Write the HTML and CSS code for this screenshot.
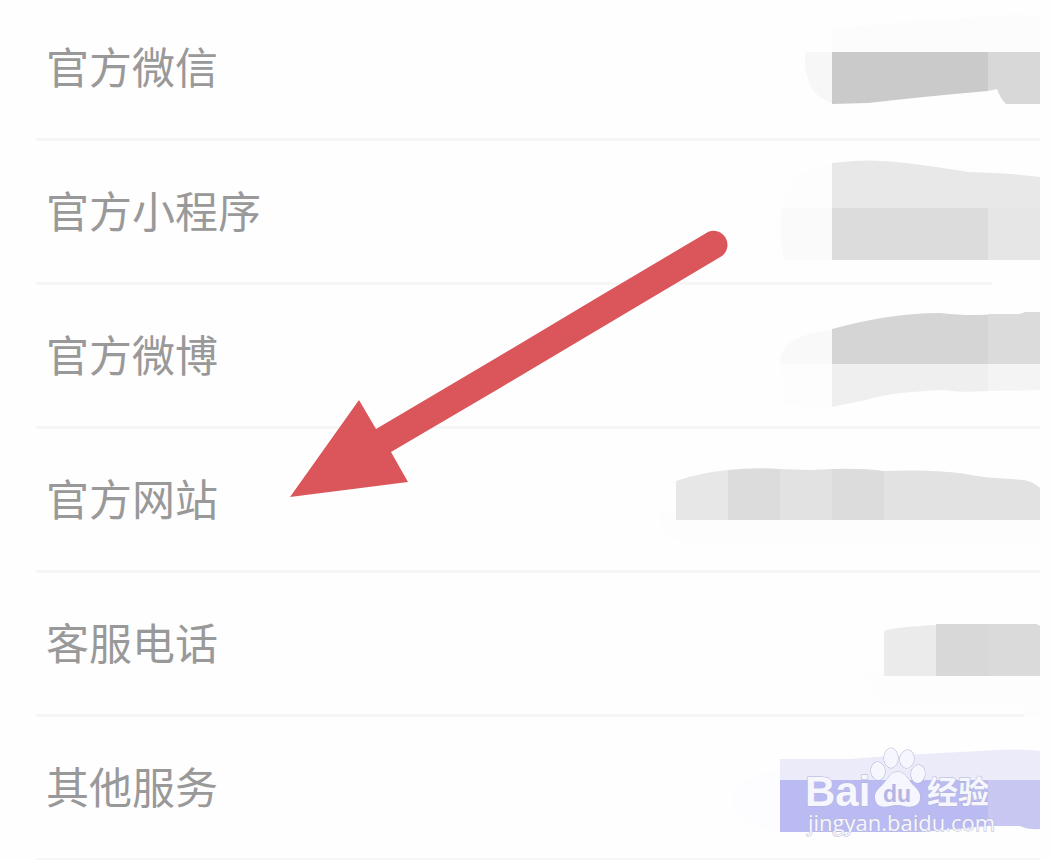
FILE: index.html
```html
<!DOCTYPE html>
<html lang="zh-CN">
<head>
    <meta charset="UTF-8">
    <meta name="viewport" content="width=device-width, initial-scale=1.0">
    <title>官方信息</title>
    <link rel="stylesheet" href="styles.css">
</head>
<body>
    <main class="page">
        <ul class="info-list">
            <li class="info-row">
                <span class="label">官方微信</span>
                <svg class="mosaic" viewBox="640 -3 400 144" aria-hidden="true">
                    <path fill="#fcfcfc" d="M832 28L990 16Q1020 13 1040 16V52H832z"/>
                    <path fill="#f7f7f7" d="M832 52H806Q803 65 808 79Q812 96 832 103z"/>
                    <path fill="#cacaca" d="M832 52H988V91Q930 96 868 103L832 104z"/>
                    <path fill="#d8d8d8" d="M988 52H1040V104H1006Q1000 98 997 89L988 91z"/>
                </svg>
            </li>
            <li class="info-row">
                <span class="label">官方小程序</span>
                <svg class="mosaic" viewBox="640 141 400 144" aria-hidden="true">
                    <path fill="#fefefe" d="M992 260H1040V285H992z"/>
                    <path fill="#fdfdfd" d="M832 164Q785 170 782 209H832z"/>
                    <path fill="#fafafa" d="M832 208H782Q778 235 784 260H832z"/>
                    <path fill="#e8e8e8" d="M832 163Q870 158 905 163Q940 167 968 172Q1010 173 1040 177V208H832z"/>
                    <path fill="#dcdcdc" d="M832 208H988V260H832z"/>
                    <path fill="#e6e6e6" d="M988 208H1040V260H988z"/>
                </svg>
            </li>
            <li class="info-row">
                <span class="label">官方微博</span>
                <svg class="mosaic" viewBox="640 285 400 144" aria-hidden="true">
                    <path fill="#f9f9f9" d="M832 330Q779 335 780 364H832z"/>
                    <path fill="#fdfdfd" d="M780 364H832V407L785 405z"/>
                    <path fill="#d5d5d5" d="M832 329Q890 313 940 313Q960 315 973 315L1020 314L1026 312H1040V364H832z"/>
                    <path fill="#dbdbdb" d="M988 314L1020 314L1026 312H1040V364H988z"/>
                    <path fill="#efefef" d="M832 364H988V391Q960 393 945 390Q890 392 866 400L832 407z"/>
                    <path fill="#f4f4f4" d="M988 364H1040V390L988 391z"/>
                </svg>
            </li>
            <li class="info-row">
                <span class="label">官方网站</span>
                <svg class="mosaic" viewBox="640 429 400 144" aria-hidden="true">
                    <path fill="#fdfdfd" d="M658 512H1040V545H700Q660 542 658 512z"/>
                    <path fill="#e7e7e7" d="M676 481Q698 473 728 470V520H676z"/>
                    <path fill="#dcdcdc" d="M728 470Q755 467 780 469V520H728z"/>
                    <path fill="#e2e2e2" d="M780 469L810 470L832 469V520H780z"/>
                    <path fill="#dcdcdc" d="M832 469Q862 468 884 471V520H832z"/>
                    <path fill="#e2e2e2" d="M884 471Q935 469 966 474Q980 477 997 478L1024 480Q1034 482 1040 488V520H884z"/>
                </svg>
            </li>
            <li class="info-row">
                <span class="label">客服电话</span>
                <svg class="mosaic" viewBox="640 573 400 144" aria-hidden="true">
                    <path fill="#fdfdfd" d="M865 672H1040V717H1024V704H880z"/>
                    <path fill="#ebebeb" d="M884 631Q895 627 936 625V676H884z"/>
                    <path fill="#d8d8d8" d="M936 624H1036L1040 626V676H936z"/>
                    <path fill="#dadada" d="M988 624H1036L1040 626V676H988z"/>
                </svg>
            </li>
            <li class="info-row">
                <span class="label">其他服务</span>
                <svg class="mosaic" viewBox="640 717 400 144" aria-hidden="true">
                    <path fill="#fdfdff" d="M780 770Q736 776 732 800Q733 825 780 832z"/>
                    <path fill="#ebebfa" d="M780 759H850Q910 754 980 751Q1015 748 1040 751V780H780z"/>
                    <path fill="#bbbbf3" d="M780 780H988V826L920 832H780z"/>
                    <path fill="#c7c7f2" d="M988 780H1040V829Q1029 830 1020 826L988 826z"/>
                </svg>
            </li>
        </ul>

        <!-- Arrow pointing at the website row -->
        <svg class="arrow" viewBox="290 229 440 269" aria-hidden="true">
            <path d="M290 497L359 400L376 429L486 364L600 296L708 232A14 14 0 0 1 722 256L616 319L500 388L391 452L408 482z"/>
        </svg>

        <!-- Baidu Jingyan watermark -->
        <svg class="watermark" viewBox="800 740 200 100" role="img" aria-label="Baidu 经验">
            <text class="brand" x="805" y="806">Bai</text>
            <g class="paw">
                <ellipse cx="891" cy="758" rx="7" ry="10"/>
                <ellipse cx="907" cy="759" rx="7" ry="9" transform="rotate(8 907 759)"/>
                <ellipse cx="878" cy="771" rx="7" ry="9" transform="rotate(-8 878 771)"/>
                <ellipse cx="918" cy="774" rx="7" ry="9" transform="rotate(8 918 774)"/>
                <path d="M898 772C906 772 908 780 913 785C918 790 921 793 920 799C919 806 911 808 904 806Q897 804 890 806C881 808 876 806 875 798C874 791 881 787 885 782C889 777 891 772 898 772z"/>
            </g>
            <text class="du" x="883" y="802">du</text>
            <text class="brand-cn" x="927" y="803">经验</text>
            <text class="site" x="808" y="831">jingyan.baidu.com</text>
        </svg>
    </main>
</body>
</html>
```
FILE: styles.css
```css
body {
    margin: 0;
    background-color: #fefefe;
    font-family: "Noto Sans CJK SC", sans-serif;
}
.page {
    position: relative;
    height: 100vh;
    overflow: hidden;
}
.info-list {
    list-style: none;
    margin: -3px 12px 0 36px;
    padding: 0;
}
.info-row {
    display: flex;
    justify-content: space-between;
    align-items: center;
    height: 144px;
    background: linear-gradient(#f6f6f6, #f6f6f6) bottom / 100% 3px no-repeat;
}
.label {
    padding: 0 0 8px 10px;
    font-size: 43px;
    line-height: 64px;
    color: #999;
}
.mosaic {
    width: 400px;
    height: 144px;
}
.arrow {
    position: absolute;
    left: 290px;
    top: 229px;
    width: 440px;
    height: 269px;
    fill: #da565b;
}
.watermark {
    position: absolute;
    right: 52px;
    top: 740px;
    width: 200px;
    height: 100px;
}
.watermark text,
.paw {
    fill: #f6f6fe;
    stroke: #b4b4d2;
    stroke-width: 1px;
    paint-order: stroke;
}
.brand {
    font: bold 42px "Liberation Sans", sans-serif;
}
.watermark .du {
    font: bold 23px "Liberation Sans", sans-serif;
    fill: #b5b5e4;
    stroke: none;
}
.brand-cn {
    font: bold 31px "Noto Sans CJK SC", sans-serif;
}
.site {
    font: 22px "Open Sans", sans-serif;
}
```
